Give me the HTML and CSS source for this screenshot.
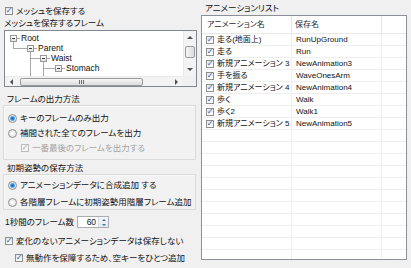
FILE: index.html
```html
<!DOCTYPE html>
<html lang="ja">
<head>
    <meta charset="UTF-8"/>
    <title>メッシュの保存</title>
    <link rel="stylesheet" href="styles.css">
</head>
<body>
<div class="w">
    <!-- 左側: 保存オプション -->
    <div class="left">
        <div class="chk top-chk"><span class="box on"></span>メッシュを保存する</div>
        <div class="cap">メッシュを保存するフレーム</div>

        <div class="tree">
            <div class="tree-rows">
                <div class="node n0"><span class="pm"></span><span class="dash"></span>Root</div>
                <div class="node n1"><span class="pm"></span><span class="dash"></span>Parent</div>
                <div class="node n2"><span class="pm"></span><span class="dash"></span>Waist</div>
                <div class="node n3"><span class="pm"></span><span class="dash"></span>Stomach</div>
                <div class="node-rest"></div>
            </div>
            <div class="vbar">
                <span class="btn"><i class="arr up"></i></span>
                <span class="vthumb"></span>
                <span class="track"></span>
                <span class="btn"><i class="arr down"></i></span>
            </div>
            <div class="hbar">
                <span class="btn"><i class="arr lt"></i></span>
                <span class="hthumb"><i class="grip"></i></span>
                <span class="track"></span>
                <span class="btn"><i class="arr rt"></i></span>
            </div>
            <div class="corner"></div>
        </div>

        <!-- フレームの出力方法 -->
        <div class="grp-title">フレームの出力方法</div>
        <div class="grp grp1">
            <div class="chk"><span class="radio on"></span>キーのフレームのみ出力</div>
            <div class="chk"><span class="radio"></span>補間された全てのフレームを出力</div>
            <div class="chk sub disabled"><span class="box on"></span>一番最後のフレームを出力する</div>
        </div>

        <!-- 初期姿勢の保存方法 -->
        <div class="grp-title t2">初期姿勢の保存方法</div>
        <div class="grp grp2">
            <div class="chk"><span class="radio on"></span>アニメーションデータに合成追加 する</div>
            <div class="chk"><span class="radio"></span>各階層フレームに初期姿勢用階層フレーム追加</div>
        </div>

        <div class="fps">
            <span>1秒間のフレーム数</span>
            <div class="spin">
                <span class="val">60</span>
                <span class="spin-btns">
                    <span class="sb"><i class="arr up blue"></i></span>
                    <span class="sb"><i class="arr down blue"></i></span>
                </span>
            </div>
        </div>
        <div class="chk c-skip"><span class="box on"></span>変化のないアニメーションデータは保存しない</div>
        <div class="chk c-empty"><span class="box on"></span>無動作を保障するため、空キーをひとつ追加</div>
    </div>

    <!-- 右側: アニメーションリスト -->
    <div class="right">
        <div class="cap list-cap">アニメーションリスト</div>
        <div class="list">
            <div class="lv-head">
                <div class="col c1">アニメーション名</div>
                <div class="col c2">保存名</div>
                <div class="col c3"></div>
            </div>
            <div class="lv-row"><div class="col c1"><span class="box on"></span>走る(地面上)</div><div class="col c2">RunUpGround</div><div class="col c3"></div></div>
            <div class="lv-row"><div class="col c1"><span class="box on"></span>走る</div><div class="col c2">Run</div><div class="col c3"></div></div>
            <div class="lv-row"><div class="col c1"><span class="box on"></span>新規アニメーション 3</div><div class="col c2">NewAnimation3</div><div class="col c3"></div></div>
            <div class="lv-row"><div class="col c1"><span class="box on"></span>手を振る</div><div class="col c2">WaveOnesArm</div><div class="col c3"></div></div>
            <div class="lv-row"><div class="col c1"><span class="box on"></span>新規アニメーション 4</div><div class="col c2">NewAnimation4</div><div class="col c3"></div></div>
            <div class="lv-row"><div class="col c1"><span class="box on"></span>歩く</div><div class="col c2">Walk</div><div class="col c3"></div></div>
            <div class="lv-row"><div class="col c1"><span class="box on"></span>歩く2</div><div class="col c2">Walk1</div><div class="col c3"></div></div>
            <div class="lv-row"><div class="col c1"><span class="box on"></span>新規アニメーション 5</div><div class="col c2">NewAnimation5</div><div class="col c3"></div></div>
            <div class="lv-row"><div class="col c1"></div><div class="col c2"></div><div class="col c3"></div></div>
            <div class="lv-row"><div class="col c1"></div><div class="col c2"></div><div class="col c3"></div></div>
            <div class="lv-row"><div class="col c1"></div><div class="col c2"></div><div class="col c3"></div></div>
            <div class="lv-row"><div class="col c1"></div><div class="col c2"></div><div class="col c3"></div></div>
            <div class="lv-row"><div class="col c1"></div><div class="col c2"></div><div class="col c3"></div></div>
            <div class="lv-row"><div class="col c1"></div><div class="col c2"></div><div class="col c3"></div></div>
            <div class="lv-row"><div class="col c1"></div><div class="col c2"></div><div class="col c3"></div></div>
            <div class="lv-row"><div class="col c1"></div><div class="col c2"></div><div class="col c3"></div></div>
            <div class="lv-row"><div class="col c1"></div><div class="col c2"></div><div class="col c3"></div></div>
            <div class="lv-row"><div class="col c1"></div><div class="col c2"></div><div class="col c3"></div></div>
            <div class="lv-row"><div class="col c1"></div><div class="col c2"></div><div class="col c3"></div></div>
        </div>
    </div>
</div>
</body>
</html>
```

FILE: styles.css
```css
* {
    margin: 0;
    padding: 0;
    box-sizing: border-box;
}

body {
    width: 411px;
    height: 268px;
    overflow: hidden;
    background: #f0f0f0;
    color: #111;
    font: 8.5px/12px "Liberation Sans", "Noto Sans CJK JP", sans-serif;
    font-feature-settings: "palt";
}

.w {
    display: flex;
}

.left {
    width: 198px;
    padding-left: 3px;
    display: flex;
    flex-direction: column;
}

.right {
    width: 206px;
    margin-left: 3px;
    padding-top: 1px;
}

/* チェックボックス・ラジオ */
.chk {
    display: flex;
    align-items: center;
    gap: 3px;
    height: 12px;
    white-space: nowrap;
}

.box {
    width: 8px;
    height: 8px;
    flex: none;
    border: 1px solid #8e8f8f;
    background: linear-gradient(#e6e6e6, #fff);
    display: inline-flex;
    align-items: center;
    justify-content: center;
}

.box.on::after {
    content: "✓";
    font: bold 8px/8px "DejaVu Sans", sans-serif;
    color: #2d5cae;
}

.radio {
    width: 9px;
    height: 9px;
    flex: none;
    border: 1px solid #8e8f8f;
    border-radius: 50%;
    background: radial-gradient(circle, #fff 0, #e3e3e3 4px);
}

.radio.on {
    background: radial-gradient(circle, #0a5fb4 0, #3a8de0 1.6px, #9ccaf2 2.6px, #f4f4f4 3.2px, #e3e3e3 4px);
}

.disabled {
    color: #a3a3a3;
}

.disabled .box {
    border-color: #bdbdbd;
    background: #f4f4f4;
}

.disabled .box.on::after {
    color: #a8a8a8;
}

.top-chk {
    margin-top: 5px;
    padding-left: 2px;
}

.cap {
    height: 13px;
    line-height: 13px;
    padding-left: 1px;
}

.list-cap {
    height: 14px;
    line-height: 14px;
    padding-left: 4px;
}

/* フレームツリー */
.tree {
    width: 193px;
    height: 57px;
    margin-left: 1px;
    border: 1px solid #828790;
    background: #fff;
    display: grid;
    grid-template-columns: 1fr 13px;
    grid-template-rows: 1fr 10px;
}

.tree-rows {
    padding-top: 2px;
    overflow: hidden;
}

.node {
    height: 10px;
    line-height: 10px;
    display: flex;
    align-items: center;
    white-space: nowrap;
}

.pm {
    width: 7px;
    height: 7px;
    flex: none;
    border: 1px solid #979797;
    background: linear-gradient(#fff, #e2e2e2);
    display: inline-flex;
    align-items: center;
    justify-content: center;
}

.pm::after {
    content: "";
    width: 3px;
    height: 1px;
    background: #3c3c3c;
}

.dash {
    width: 3px;
    height: 1px;
    margin-right: 1px;
    background: #a8a8a8;
}

.n0 {
    padding-left: 5px;
    background: linear-gradient(#a8a8a8, #a8a8a8) 8px 9px / 1px 1px no-repeat;
}

.n1 {
    padding-left: 22px;
    background:
        linear-gradient(#a8a8a8, #a8a8a8) 8px 0 / 1px 5px no-repeat,
        linear-gradient(#a8a8a8, #a8a8a8) 8px 5px / 14px 1px no-repeat,
        linear-gradient(#a8a8a8, #a8a8a8) 25px 9px / 1px 1px no-repeat;
}

.n2 {
    padding-left: 35px;
    background:
        linear-gradient(#a8a8a8, #a8a8a8) 25px 0 / 1px 100% no-repeat,
        linear-gradient(#a8a8a8, #a8a8a8) 25px 5px / 10px 1px no-repeat,
        linear-gradient(#a8a8a8, #a8a8a8) 38px 9px / 1px 1px no-repeat;
}

.n3 {
    padding-left: 50px;
    background:
        linear-gradient(#a8a8a8, #a8a8a8) 25px 0 / 1px 100% no-repeat,
        linear-gradient(#a8a8a8, #a8a8a8) 38px 0 / 1px 100% no-repeat,
        linear-gradient(#a8a8a8, #a8a8a8) 38px 5px / 12px 1px no-repeat;
}

.node-rest {
    height: 10px;
    background:
        linear-gradient(#a8a8a8, #a8a8a8) 25px 0 / 1px 100% no-repeat,
        linear-gradient(#a8a8a8, #a8a8a8) 38px 0 / 1px 100% no-repeat;
}

/* スクロールバー */
.vbar,
.hbar {
    display: flex;
    background: #f3f3f3;
}

.vbar {
    flex-direction: column;
    border-left: 1px solid #eaeaea;
}

.hbar {
    border-top: 1px solid #eaeaea;
}

.btn {
    flex: none;
    display: flex;
    align-items: center;
    justify-content: center;
}

.vbar .btn {
    height: 13px;
}

.hbar .btn {
    width: 13px;
}

.track {
    flex: 1;
}

.vthumb {
    height: 12px;
    margin: 2px 1px 0;
    border: 1px solid #9a9a9a;
    border-radius: 2px;
    background: linear-gradient(90deg, #f6f6f6, #dcdcdc);
}

.hthumb {
    width: 123px;
    margin: 1px 0 0 2px;
    border: 1px solid #9a9a9a;
    border-radius: 2px;
    background: linear-gradient(#f6f6f6, #dcdcdc);
    display: flex;
    align-items: center;
    justify-content: center;
}

.grip {
    width: 5px;
    height: 4px;
    background: repeating-linear-gradient(90deg, #6f6f6f 0 1px, transparent 1px 2px);
}

.corner {
    background: #f0f0f0;
}

.arr {
    width: 0;
    height: 0;
    border: 3px solid transparent;
}

.arr.up {
    border-top: 0;
    border-bottom-color: #505050;
}

.arr.down {
    border-bottom: 0;
    border-top-color: #505050;
}

.arr.lt {
    border-left: 0;
    border-right-color: #505050;
}

.arr.rt {
    border-right: 0;
    border-left-color: #505050;
}

/* グループ */
.grp-title {
    margin-top: 6px;
    height: 12px;
    line-height: 12px;
    padding-left: 4px;
}

.grp-title.t2 {
    margin-top: 2px;
}

.grp {
    width: 193px;
    border: 1px solid #dadada;
    box-shadow: inset 1px 1px 0 #fafafa;
    background: #f2f2f2;
    padding-left: 4px;
    display: flex;
    flex-direction: column;
}

.grp1 {
    height: 55px;
    padding-top: 6px;
    gap: 3px;
}

.grp2 {
    height: 36px;
    padding-top: 4px;
    gap: 5px;
}

.grp .sub {
    padding-left: 13px;
}

/* フレーム数 */
.fps {
    margin-top: 6px;
    padding-left: 2px;
    height: 12px;
    display: flex;
    align-items: center;
    gap: 3px;
}

.spin {
    width: 32px;
    height: 12px;
    border: 1px solid #abadb3;
    background: #fff;
    display: flex;
    justify-content: flex-end;
}

.spin .val {
    line-height: 10px;
    padding-right: 2px;
}

.spin-btns {
    width: 10px;
    display: flex;
    flex-direction: column;
    border-left: 1px solid #d6dbe3;
    background: linear-gradient(#f4f6f9, #e3e8ef);
}

.sb {
    flex: 1;
    display: flex;
    align-items: center;
    justify-content: center;
}

.sb .arr {
    border-width: 2px;
}

.arr.up.blue {
    border-top: 0;
    border-bottom-color: #3d6fb4;
}

.arr.down.blue {
    border-bottom: 0;
    border-top-color: #3d6fb4;
}

.c-skip {
    margin-top: 7px;
    padding-left: 2px;
}

.c-empty {
    margin-top: 5px;
    padding-left: 12px;
}

/* アニメーションリスト */
.list {
    height: 245px;
    border: 1px solid #8b8f97;
    background: #fff;
    overflow: hidden;
    font-size: 8px;
}

.lv-head,
.lv-row {
    display: grid;
    grid-template-columns: 90px 90px 1fr;
}

.lv-head {
    height: 18px;
    border-bottom: 1px solid #e8e8e8;
    color: #2a2a2a;
}

.lv-row {
    height: 12px;
    border-bottom: 1px solid #efefef;
}

.col {
    display: flex;
    align-items: center;
    gap: 3px;
    padding-left: 4px;
    white-space: nowrap;
    overflow: hidden;
    border-right: 1px solid #efefef;
}

.lv-head .col {
    border-right-color: #e4e4e4;
}

.lv-head .c1 {
    padding-left: 5px;
}

.lv-head .c2 {
    padding-left: 3px;
}

.col.c3 {
    border-right: none;
}
```
